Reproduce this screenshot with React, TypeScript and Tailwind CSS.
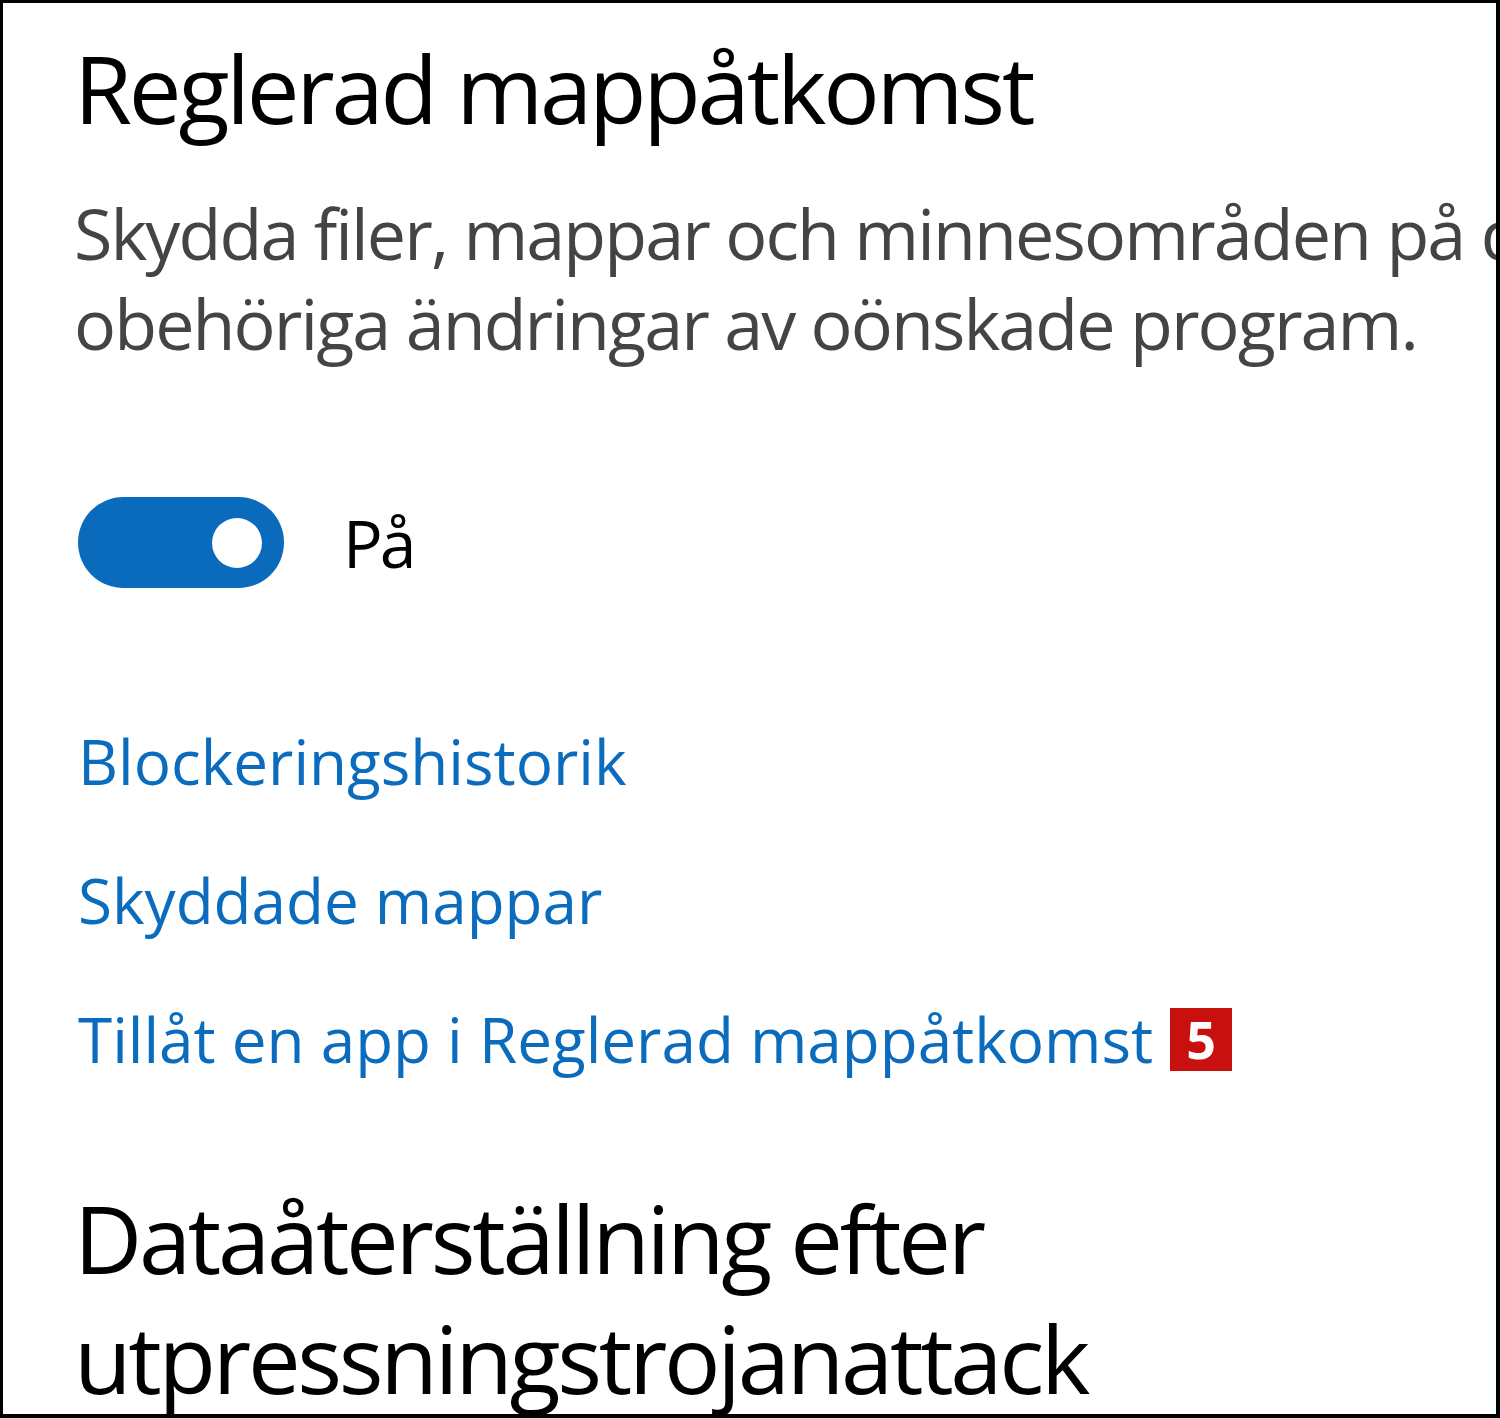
const FONT = "font-['Open_Sans','Noto_Sans',sans-serif]";

function Toggle() {
  return (
    <div className="flex h-[91px] w-[206px] items-center justify-end rounded-full bg-[#0a6bbd] pr-[22px]">
      <div className="h-[50px] w-[50px] rounded-full bg-white" />
    </div>
  );
}

function Badge() {
  return (
    <span className="ml-[17px] flex h-[63px] w-[62px] items-center justify-center bg-[#c8100f] text-[52px] font-bold leading-none text-white">
      5
    </span>
  );
}

export default function App() {
  return (
    <div className={`${FONT} h-[1418px] w-[1500px] overflow-hidden bg-white`}>
      <div className="h-full w-full overflow-hidden border-[3px] border-r-[4px] border-b-[4px] border-black bg-white pl-[71px] pt-[25px]">
        <h1 className="whitespace-nowrap text-[94px] font-normal leading-[120px] tracking-[-3.2px] text-black">
          Reglerad mappåtkomst
        </h1>

        <div className="mt-[40px] whitespace-nowrap text-[70px] font-normal leading-[90px] tracking-[-1.9px] text-[#444444]">
          <p>Skydda filer, mappar och minnesområden på din enhet från</p>
          <p>obehöriga ändringar av oönskade program.</p>
        </div>

        <div className="mt-[129px] flex items-center gap-[59px] pl-[4px]">
          <Toggle />
          <span className="text-[66px] leading-[91px] tracking-[-3px] text-black">På</span>
        </div>

        <div className="mt-[128px] flex flex-col gap-[49px] pl-[4px] text-[62px] leading-[90px] text-[#0b6cbd]">
          <a>Blockeringshistorik</a>
          <a>Skyddade mappar</a>
          <div className="flex items-center whitespace-nowrap">
            <a>Tillåt en app i Reglerad mappåtkomst</a>
            <Badge />
          </div>
        </div>

        <h2 className="mt-[94px] whitespace-nowrap text-[94px] font-normal leading-[120px] tracking-[-3.3px] text-black">
          Dataåterställning efter
          <br />
          utpressningstrojanattack
        </h2>
      </div>
    </div>
  );
}
